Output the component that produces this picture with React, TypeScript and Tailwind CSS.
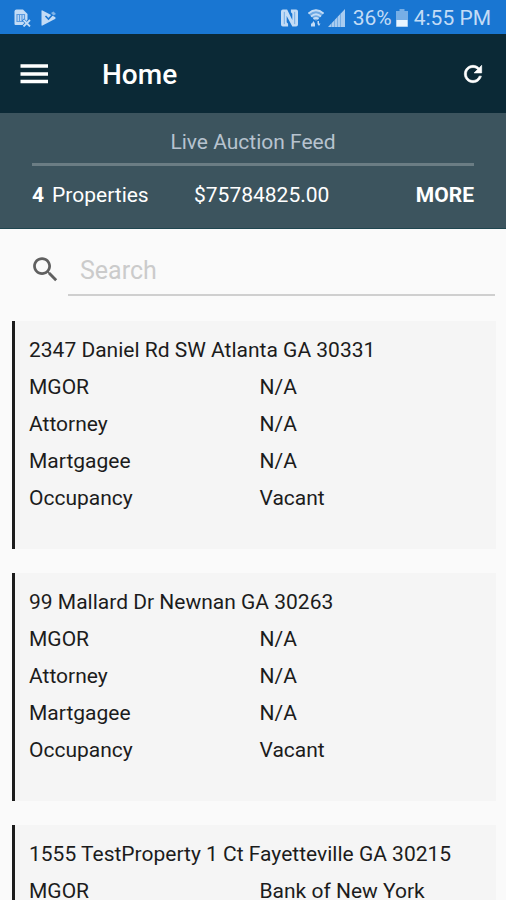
type Property = {
  address: string;
  details: { label: string; value: string }[];
};

const properties: Property[] = [
  {
    address: "2347 Daniel Rd SW Atlanta GA 30331",
    details: [
      { label: "MGOR", value: "N/A" },
      { label: "Attorney", value: "N/A" },
      { label: "Martgagee", value: "N/A" },
      { label: "Occupancy", value: "Vacant" },
    ],
  },
  {
    address: "99 Mallard Dr Newnan GA 30263",
    details: [
      { label: "MGOR", value: "N/A" },
      { label: "Attorney", value: "N/A" },
      { label: "Martgagee", value: "N/A" },
      { label: "Occupancy", value: "Vacant" },
    ],
  },
  {
    address: "1555 TestProperty 1 Ct Fayetteville GA 30215",
    details: [{ label: "MGOR", value: "Bank of New York" }],
  },
];

function StatusBar() {
  return (
    <div className="flex h-[34px] shrink-0 items-center justify-between bg-[#1976d2] pt-0.5 pr-[15px] pl-3.5 text-[#c3dcf6]">
      <div className="flex items-center gap-2.5">
        {/* SIM card with error */}
        <svg className="h-[18px] w-[17px]" viewBox="0 0 17 18" aria-hidden="true">
          <path d="M2.5 0.5H9L13.5 5V16H1.5Q0.5 16 0.5 15V2.5Q0.5 0.5 2.5 0.5Z" fill="currentColor" />
          <path d="M3 5.5H10.5V12.5H3ZM5.5 5.5V12.5M8 5.5V12.5" fill="none" stroke="#5b9be0" strokeWidth="1.2" />
          <path d="M9 10.5L16 17.5M16 10.5L9 17.5" stroke="#1976d2" strokeWidth="3" />
          <path d="M9.5 11L16 17.5M16 11L9.5 17.5" stroke="currentColor" strokeWidth="1.8" />
        </svg>
        {/* Play Store check */}
        <svg className="h-4 w-[15px]" viewBox="0 0 15 16" aria-hidden="true">
          <path d="M1.5 0.5L14 7Q15.2 8 14 9L1.5 15.5Q0.5 16 0.5 15V1Q0.5 0 1.5 0.5Z" fill="currentColor" />
          <path d="M4.5 6L7.5 9L13 3" fill="none" stroke="#1976d2" strokeWidth="1.6" />
          <path d="M10 3L12.5 1.5L15 4L12.5 5.5" fill="currentColor" fillOpacity="0.6" />
        </svg>
      </div>
      <div className="flex items-center text-[21px] leading-6">
        {/* NFC */}
        <svg className="h-[18px] w-[17px]" viewBox="0 0 18 18" aria-hidden="true">
          <path d="M2 0H6.5L12 11V4.5L10.5 3V0H16Q18 0 18 2V16Q18 18 16 18H12L6 7V13.5L7.5 15V18H2Q0 18 0 16V2Q0 0 2 0Z" fill="currentColor" />
          <path d="M3.5 2.5V15.5M14.500 2.5V15.5" stroke="#1976d2" strokeOpacity="0.5" strokeWidth="1" />
        </svg>
        {/* Wi-Fi with transfer arrows */}
        <svg className="ml-2.5 h-[18px] w-4" viewBox="0 0 16 18" aria-hidden="true">
          <path d="M0 4Q8 -3 16 4L8 12Z" fill="currentColor" fillOpacity="0.5" />
          <path d="M0.5 4.5Q8 -2 15.5 4.500M3 7.5Q8 3 13 7.5M5.5 10Q8 8 10.5 10" fill="none" stroke="currentColor" strokeWidth="1.7" />
          <path d="M3 17.5V14.500H4L5.5 12L7 14.5V17.5ZM9.5 12H11V14.5H12.5L11 17L9.5 15Z" fill="currentColor" />
        </svg>
        {/* Signal strength */}
        <svg className="ml-1 h-[18px] w-[17px]" viewBox="0 0 17 18" aria-hidden="true">
          <path d="M0 18L17 0V18Z" fill="currentColor" fillOpacity="0.85" />
          <path d="M3.5 14V18M6.5 11V18M9.5 8V18M12.5 5V18" stroke="#1976d2" strokeOpacity="0.35" strokeWidth="1" />
        </svg>
        <span className="ml-2">36%</span>
        {/* Battery */}
        <svg className="ml-1 h-[18px] w-3" viewBox="0 0 12 18" aria-hidden="true">
          <path d="M3.5 0H8.5V2H12V18H0V2H3.5Z" fill="currentColor" fillOpacity="0.55" />
          <path d="M0.5 11H11.5V17.5H0.5Z" fill="#e8f4ff" />
        </svg>
        <span className="ml-1.5">4:55 PM</span>
      </div>
    </div>
  );
}

function AppBar() {
  return (
    <header className="flex h-[79px] shrink-0 items-center bg-[#0b2936] px-5 text-white">
      <button type="button" aria-label="Open menu">
        <svg className="h-7 w-7" viewBox="0 0 28 28" aria-hidden="true">
          <path d="M0.5 6H28M0.5 14H28M0.5 21.5H28" stroke="currentColor" strokeWidth="3.5" />
        </svg>
      </button>
      <h1 className="ml-[54px] pt-0.5 text-[28px] leading-8 font-medium">Home</h1>
      <button type="button" aria-label="Refresh" className="ml-auto">
        <svg className="h-[26px] w-[26px]" viewBox="0 0 24 24" aria-hidden="true">
          <path
            d="M17.65 6.35C16.2 4.9 14.21 4 12 4c-4.42 0-7.99 3.58-7.99 8s3.57 8 7.99 8c3.73 0 6.84-2.55 7.73-6h-2.08c-.82 2.33-3.04 4-5.65 4-3.31 0-6-2.69-6-6s2.69-6 6-6c1.66 0 3.14.69 4.22 1.78L13 11h7V4l-2.35 2.35z"
            fill="currentColor"
            stroke="currentColor"
            strokeWidth="0.6"
          />
        </svg>
      </button>
    </header>
  );
}

function AuctionFeed() {
  return (
    <section className="h-[116px] shrink-0 border-b border-[#1f4650] bg-[#3c545e] px-8 pt-[15px] text-[21px] text-white">
      <h2 className="border-b-3 border-[#6b7d84] pb-[7px] text-center leading-7 text-[#b7c3cf]">Live Auction Feed</h2>
      <div className="mt-[15px] flex items-center leading-7">
        <p className="w-[162px]">
          <span className="mr-2 font-bold">4</span>
          Properties
        </p>
        <p>$75784825.00</p>
        <button type="button" className="ml-auto font-bold">MORE</button>
      </div>
    </section>
  );
}

function SearchBox() {
  return (
    <div className="flex items-end pr-[11px] pl-[29px]">
      <label htmlFor="search" className="mb-2.5 shrink-0" aria-label="Search">
        <svg className="h-[33px] w-[33px]" viewBox="0 0 24 24" aria-hidden="true">
          <path d="M15.5 14h-.79l-.28-.27C15.41 12.59 16 11.11 16 9.5 16 5.91 13.09 3 9.5 3S3 5.91 3 9.5 5.91 16 9.5 16c1.61 0 3.09-.59 4.23-1.57l.27.28v.79l5 4.99L20.49 19l-4.99-5zm-6 0C7.01 14 5 11.99 5 9.5S7.01 5 9.5 5 14 7.01 14 9.5 11.99 14 9.5 14z" fill="#606060" />
        </svg>
      </label>
      <input
        id="search"
        type="search"
        placeholder="Search"
        className="ml-1.5 h-[52px] min-w-0 flex-1 border-b-2 border-[#cfcfcf] bg-transparent px-3 pt-0.5 text-[25px] text-[#222] outline-none placeholder:text-[#cbcbcb]"
      />
    </div>
  );
}

function PropertyCard({ address, details }: Property) {
  return (
    <article className="min-h-[228px] border-l-3 border-[#1c1c1c] bg-[#f5f5f5] px-3.5 pt-[11px] text-[21px] leading-[37px] text-[#1c1c1c]">
      <h3>{address}</h3>
      <dl className="grid grid-cols-2">
        {details.map((detail) => (
          <div key={detail.label} className="col-span-2 grid grid-cols-subgrid">
            <dt>{detail.label}</dt>
            <dd className="pl-1">{detail.value}</dd>
          </div>
        ))}
      </dl>
    </article>
  );
}

export default function App() {
  return (
    <div className="flex h-screen flex-col bg-[#fafafa] font-[Roboto,sans-serif]">
      <StatusBar />
      <AppBar />
      <AuctionFeed />
      <main className="min-h-0 flex-1 overflow-y-auto pt-[15px] [scrollbar-width:none]">
        <SearchBox />
        <div className="mt-[25px] flex flex-col gap-6 pr-2.5 pl-3">
          {properties.map((property) => (
            <PropertyCard key={property.address} {...property} />
          ))}
        </div>
      </main>
    </div>
  );
}
